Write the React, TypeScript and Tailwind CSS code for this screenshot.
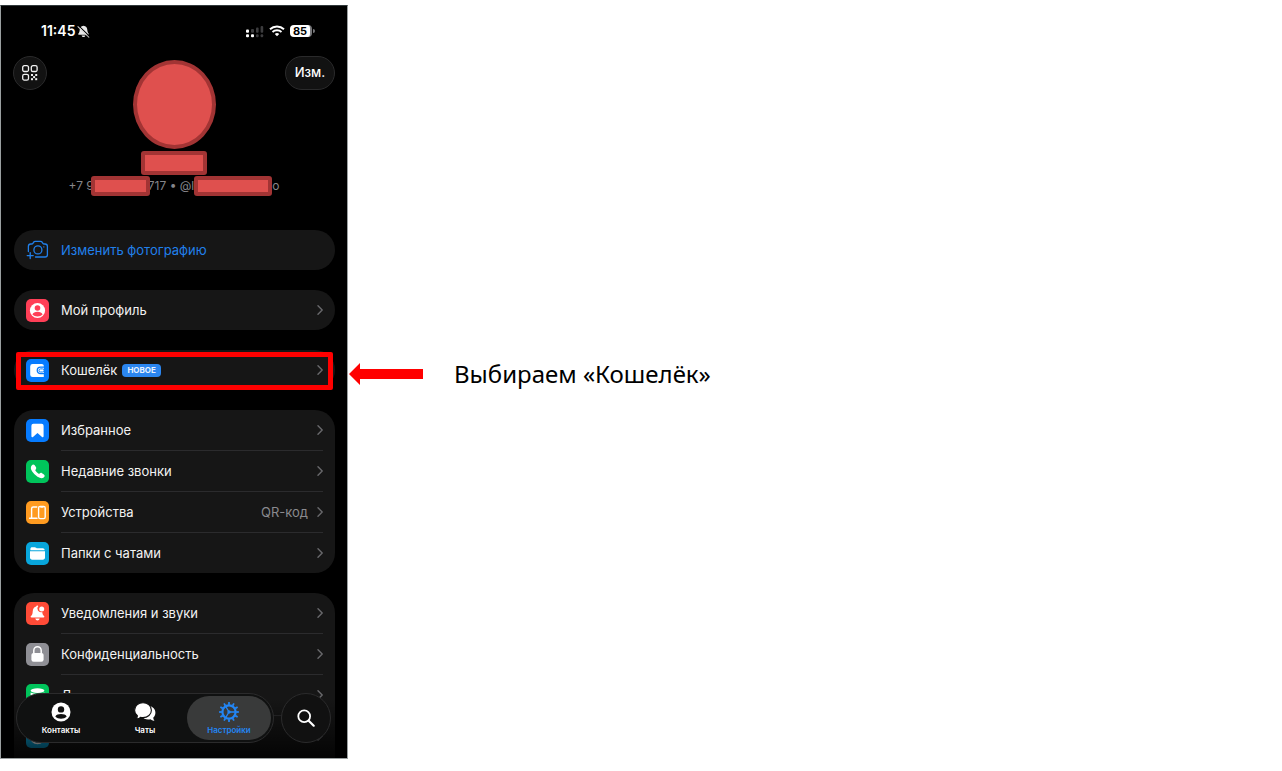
import React from 'react';

type RowProps = {
  icon: React.ReactNode;
  label?: string;
  badge?: string;
  value?: string;
  divided?: boolean;
};

function Chevron() {
  return (
    <svg width="6" height="10" viewBox="0 0 6 10" fill="none" stroke="#69696c" strokeWidth="1.4" strokeLinecap="round" strokeLinejoin="round" aria-hidden="true">
      <path d="M1 .8 5.200 5 1 9.200" />
    </svg>
  );
}

function Tile({ className, children }: { className: string; children: React.ReactNode }) {
  return (
    <span className={`flex size-[23px] items-center justify-center rounded-[5px] ${className}`}>
      <svg width="23" height="23" viewBox="0 0 23 23" fill="none" aria-hidden="true">
        {children}
      </svg>
    </span>
  );
}

function Row({ icon, label, badge, value, divided }: RowProps) {
  return (
    <button type="button" className="flex w-full items-stretch gap-3 px-3 text-left">
      <span className="flex h-10 items-center">{icon}</span>
      <span className={divided ? 'flex h-[41px] flex-1 items-center border-b border-[#2b2b2d]' : 'flex h-10 flex-1 items-center'}>
        {label && <span className="text-[13px] leading-4 text-[#f2f2f2]">{label}</span>}
        {badge && (
          <span className="ml-[5px] rounded-[4px] bg-[#2b86f0] px-[5px] text-[8px] leading-[13px] font-bold text-[#e8f2ff]">{badge}</span>
        )}
        <span className="ml-auto flex items-center gap-[9px]">
          {value && <span className="text-[13px] leading-4 text-[#8a8a8e]">{value}</span>}
          <Chevron />
        </span>
      </span>
    </button>
  );
}

function ProfileTile() {
  return (
    <Tile className="bg-[#ff3f57]">
      <circle cx="11.5" cy="11.5" r="7.6" fill="#fff" />
      <circle cx="11.5" cy="9" r="2.8" fill="#ff3f57" />
      <path d="M6.4 15.6c.7-2 2.6-2.8 5.1-2.8s4.400.8 5.100 2.800c-1.200 1.300-3 2-5.100 2s-3.900-.7-5.100-2Z" fill="#ff3f57" />
    </Tile>
  );
}

function WalletTile() {
  return (
    <Tile className="bg-[#067bff]">
      <path d="M6.600 5h9.200c1.200 0 2 .8 2 1.900v11.200H6.600a2.400 2.400 0 0 1-2.400-2.400V7.400A2.400 2.400 0 0 1 6.600 5Z" fill="#fff" />
      <path d="M18.800 8.200h-4.300a3.200 3.200 0 0 0 0 6.500h4.300" stroke="#067bff" strokeWidth="1.300" />
      <rect x="13" y="9.900" width="5" height="3.100" rx="1.500" stroke="#067bff" strokeWidth="1" fill="#fff" />
    </Tile>
  );
}

function BookmarkTile() {
  return (
    <Tile className="bg-[#067bff]">
      <path d="M7.400 4.800h8.200a2 2 0 0 1 2 2v10.400c0 .9-.9 1.300-1.600.7l-4.500-3.900-4.500 3.900c-.7.6-1.600.2-1.600-.7V6.800a2 2 0 0 1 2-2Z" fill="#fff" />
    </Tile>
  );
}

function PhoneTile() {
  return (
    <Tile className="bg-[#00c45b]">
      <path d="M5.700 5.400c1-1.200 2-1.300 2.800-.3l1.400 2c.6.9.4 1.600-.2 2.300-.5.500-.5.900-.2 1.400a11 11 0 0 0 2.800 2.800c.5.300.9.300 1.400-.2.700-.6 1.400-.8 2.300-.2l1.900 1.300c1.100.9 1 1.900-.2 2.900-1.400 1.200-3.500.9-6.200-.6a17 17 0 0 1-5.300-5.200C4.600 8.900 4.400 6.900 5.700 5.400Z" fill="#fff" />
    </Tile>
  );
}

function DevicesTile() {
  return (
    <Tile className="bg-[#ff9b20]">
      <path d="M10.800 6H7.300C6.300 6 5.600 6.700 5.600 7.700v9" stroke="#fff" strokeWidth="1.400" strokeLinecap="round" strokeLinejoin="round" />
      <path d="M3.600 17.300h7.400" stroke="#fff" strokeWidth="1.500" strokeLinecap="round" />
      <rect x="12.600" y="5.400" width="6.600" height="12.200" rx="1.600" stroke="#fff" strokeWidth="1.400" />
      <path d="M14.800 6h2.200" stroke="#fff" strokeWidth="1.500" strokeLinecap="round" />
    </Tile>
  );
}

function FolderTile() {
  return (
    <Tile className="bg-[#08a6dc]">
      <path d="M4.400 8.200V6.900c0-1 .7-1.700 1.700-1.700h2.700c.5 0 .9.200 1.300.5l.7.600h6c1 0 1.800.7 1.800 1.700v.2Z" fill="#fff" />
      <path d="M4 9.300h15v6.300c0 1.300-.9 2.200-2.200 2.200H6.200c-1.300 0-2.200-.9-2.200-2.200Z" fill="#fff" />
    </Tile>
  );
}

function BellTile() {
  return (
    <Tile className="bg-[#ff4b37]">
      <path d="M12.300 4a3.700 3.700 0 0 0 3.900 6c.2 1.900.8 3.200 1.800 4 .7.700.4 1.500-.5 1.500h-12c-.9 0-1.200-.8-.5-1.500C6.200 12.900 6.600 11.700 6.700 9.400 6.800 6.300 8.400 4.900 10.200 4.400c.2-1 1.700-1.300 2.100-.4Z" fill="#fff" />
      <path d="M9.300 16.500h4.400c-.3 1.200-1.100 1.900-2.200 1.900s-1.900-.7-2.200-1.900Z" fill="#fff" />
      <circle cx="15.700" cy="6.900" r="2.500" fill="#fff" />
    </Tile>
  );
}

function LockTile() {
  return (
    <Tile className="bg-[#8f8f95]">
      <path d="M7.800 10.500V7.500a3.700 3.700 0 0 1 7.400 0v3" stroke="#fff" strokeWidth="1.500" />
      <rect x="5.400" y="9.900" width="12.200" height="8.800" rx="2.200" fill="#fff" />
    </Tile>
  );
}

function DataTile() {
  return (
    <Tile className="bg-[#00c45b]">
      <ellipse cx="11.500" cy="6.600" rx="6.900" ry="2.400" fill="#fff" />
      <path d="M4.600 8.600c3.600 1.900 10.200 1.900 13.800 0v3c-3.200 2.200-10.600 2.200-13.800 0ZM4.600 13c3.600 1.900 10.200 1.900 13.800 0v3.200c-3.200 2.400-10.600 2.400-13.800 0Z" fill="#fff" />
    </Tile>
  );
}

function AppearanceTile() {
  return (
    <Tile className="bg-[#08a6dc]">
      <circle cx="11.500" cy="11.500" r="7" stroke="#fff" strokeWidth="1.500" />
      <path d="M11.500 4.500a7 7 0 0 1 0 14Z" fill="#fff" />
    </Tile>
  );
}

function StatusBar() {
  return (
    <div className="flex h-5 items-center pr-8 pl-10">
      <span className="text-[14px] leading-5 font-semibold text-white">11:45</span>
      <svg className="ml-[2px]" width="13" height="13" viewBox="0 0 14 14" aria-label="Без звука">
        <path d="M7 .8c2.700.3 4 1.900 4.100 4.300.1 2.100.6 3.200 1.400 4.100.5.600.3 1.300-.5 1.300H2c-.8 0-1-.7-.5-1.300.8-.9 1.300-2 1.400-4.100C3 2.700 4.300 1.100 7 .8ZM5 11.400h4c-.3 1.100-1 1.600-2 1.600s-1.700-.5-2-1.600Z" fill="#e8e8e8" />
        <path d="m1.900 1 11.400 11" stroke="#000" strokeWidth="1.100" />
        <path d="m1 1.800 11.800 11.400" stroke="#d7d7d7" strokeWidth="1.100" strokeLinecap="round" />
      </svg>
      <div className="ml-auto flex items-center gap-[5px]">
        <svg width="19" height="13" viewBox="0 0 19 13" aria-label="Сигнал">
          <rect x="1" y="4.500" width="3" height="3.200" rx="1" fill="#fff" />
          <rect x="1" y="9.300" width="3" height="3" rx="1" fill="#fff" />
          <rect x="6" y="9.300" width="3" height="3" rx="1" fill="#fff" />
          <g fill="#3c3c3e">
            <rect x="6" y="4" width="3" height="3.700" rx="1" />
            <rect x="11" y="2.500" width="2.600" height="5.200" rx="1" />
            <rect x="11" y="9.300" width="2.600" height="3" rx="1" />
            <rect x="15.600" y="1" width="2.600" height="6.700" rx="1" />
            <rect x="15.600" y="9.300" width="2.600" height="3" rx="1" />
          </g>
        </svg>
        <svg width="16" height="12" viewBox="0 0 16 12" fill="none" stroke="#fff" strokeWidth="1.900" aria-label="Wi-Fi">
          <path d="M1 4.300c3.900-3.700 10.100-3.700 14 0" />
          <path d="M3.500 7c2.500-2.300 6.500-2.300 9 0" />
          <path d="M5.800 8.900a3.300 3.300 0 0 1 4.400 0L8 11.300Z" fill="#fff" stroke="none" />
        </svg>
        <span className="flex items-center gap-px">
          <span className="flex h-3 w-[22px] items-center justify-center rounded-[4px] border-r-2 border-[#77777a] bg-white text-[11px] leading-3 font-bold text-black">85</span>
          <span className="h-1 w-[2px] rounded-r-sm bg-[#77777a]" />
        </span>
      </div>
    </div>
  );
}

function Redaction({ className }: { className: string }) {
  return <span className={`relative block shrink-0 border-4 border-[#a23434] bg-[#df504e] ${className}`} />;
}

function Card({ children, className = '' }: { children: React.ReactNode; className?: string }) {
  return <section className={`relative bg-[#161616] ${className}`}>{children}</section>;
}

const gearTeeth = [0, 30, 60, 90, 120, 150, 180, 210, 240, 270, 300, 330];

function TabBar() {
  return (
    <div className="absolute right-4 bottom-[15px] left-[15px] flex items-center gap-[7px]">
      <nav className="grid flex-1 grid-cols-3 rounded-full border border-[#2b2b2c] bg-[#101111] p-[2px] text-[8px] leading-2 font-semibold text-white">
        <button type="button" className="flex h-11 flex-col items-center gap-1 pt-[6px]">
          <svg width="20" height="20" viewBox="0 0 20 20" aria-hidden="true">
            <circle cx="10" cy="10" r="9.500" fill="#fff" />
            <circle cx="10" cy="7.400" r="3.200" fill="#111" />
            <path d="M4.300 14.500c.9-1.800 3.100-2.500 5.700-2.500s4.800.7 5.700 2.500c-1.400 1.500-3.400 2.200-5.700 2.200s-4.300-.7-5.700-2.200Z" fill="#111" />
          </svg>
          Контакты
        </button>
        <button type="button" className="flex h-11 flex-col items-center gap-1 pt-[6px]">
          <svg width="22" height="20" viewBox="0 0 22 20" aria-hidden="true">
            <path d="M14.500 3.800c4 .5 6.900 3.300 6.900 6.900 0 2-.8 3.700-2.200 5 .1 1.200.6 2.200 1.300 2.900-1.400.2-2.900-.3-4.100-1.300-3.600.7-6.800-.4-8.500-2.700Z" fill="#fff" />
            <path d="M9 .8c4.700 0 8.400 3.200 8.400 7.400s-3.700 7.400-8.400 7.400c-.9 0-1.700-.1-2.500-.3-1 .9-2.700 1.600-4.200 1.300.7-.8 1.100-1.800 1.100-2.800A7.100 7.100 0 0 1 .6 8.200C.6 4 4.300.8 9 .8Z" fill="#fff" stroke="#111" strokeWidth="1.100" />
          </svg>
          Чаты
        </button>
        <button type="button" aria-current="page" className="flex h-11 flex-col items-center gap-1 rounded-full bg-[#393a3a] pt-[6px] text-[#2386f5]">
          <svg width="20" height="20" viewBox="0 0 20 20" fill="none" stroke="currentColor" aria-hidden="true">
            <circle cx="10" cy="10" r="6.600" strokeWidth="2.200" />
            {gearTeeth.map((angle) => (
              <path key={angle} d="M9.200 0h1.600l.2 2.800H9Z" fill="currentColor" stroke="none" transform={`rotate(${angle} 10 10)`} />
            ))}
            <circle cx="10" cy="10" r="1.700" fill="currentColor" stroke="none" />
            <path d="M10 10 6.700 4.300M10 10h6.500M10 10l-3.300 5.700" strokeWidth="1.300" />
          </svg>
          Настройки
        </button>
      </nav>
      <button type="button" aria-label="Поиск" className="flex size-[50px] items-center justify-center rounded-full border border-[#2b2b2c] bg-[#111111]">
        <svg width="18" height="18" viewBox="0 0 18 18" fill="none" stroke="#fff" strokeWidth="1.800" strokeLinecap="round" aria-hidden="true">
          <circle cx="7.200" cy="7.200" r="5.900" />
          <path d="m11.700 11.700 5 5" strokeWidth="2.200" />
        </svg>
      </button>
    </div>
  );
}

function Phone() {
  return (
    <div className="relative w-[348px] shrink-0 overflow-hidden border border-[#9a9fa0] border-t-[#30383a] bg-black">
      <div className="pt-[15px]">
        <StatusBar />
      </div>
      <header className="flex items-start justify-between pt-[15px] pr-3 pl-3">
        <button type="button" aria-label="QR-код" className="flex size-[34px] items-center justify-center rounded-full border border-[#2a2a2b] bg-[#121212]">
          <svg width="16" height="16" viewBox="0 0 16 16" className="shrink-0" fill="none" stroke="#f0f0f0" strokeWidth="1.300" aria-hidden="true">
            <rect x=".7" y=".7" width="5.800" height="5.800" rx="1.600" />
            <rect x="9.300" y=".7" width="5.800" height="5.800" rx="1.600" />
            <rect x=".7" y="9.300" width="5.800" height="5.800" rx="1.600" />
            <g fill="#f0f0f0" stroke="none">
              <rect x="9" y="9" width="2" height="2" />
              <rect x="13.200" y="9" width="2" height="2" />
              <rect x="11.100" y="11.100" width="2" height="2" />
              <rect x="9" y="13.200" width="2" height="2" />
              <rect x="13.200" y="13.200" width="2" height="2" />
            </g>
          </svg>
        </button>
        <div className="flex flex-col items-center gap-[2px] pt-1 pl-4">
          <Redaction className="h-[89px] w-[83px] rounded-[50%]" />
          <Redaction className="h-6 w-[66px] rounded-[3px]" />
        </div>
        <button type="button" className="h-[34px] w-[50px] rounded-full border border-[#2a2a2b] bg-[#121212] text-[13px] font-medium text-white">Изм.</button>
      </header>
      <p className="flex h-[22px] items-center justify-center text-[12px] text-[#85858a]">
        <span>+7 9</span>
        <Redaction className="-ml-[3px] h-5 w-[59px] rounded-[3px]" />
        <span className="-ml-[2px] whitespace-pre">717 • @l</span>
        <Redaction className="h-5 w-[78px] rounded-[3px]" />
        <span>o</span>
      </p>
      <main className="flex flex-col gap-5 pt-[33px] pr-3 pl-[13px]">
        <Card className="rounded-full">
          <button type="button" className="flex h-10 w-full items-center gap-3 px-3 text-[13px] leading-4 text-[#2180eb]">
            <svg width="23" height="20" viewBox="0 0 23 20" fill="none" stroke="currentColor" strokeWidth="1.300" strokeLinecap="round" strokeLinejoin="round" aria-hidden="true">
              <path d="M2.400 11.500V6.300c0-1.400.9-2.300 2.300-2.300h.9c.6 0 1-.2 1.300-.7l.6-.9c.4-.7 1-1 1.800-1h5.200c.8 0 1.400.3 1.800 1l.6.9c.3.500.7.7 1.300.7h.9c1.400 0 2.300.9 2.300 2.300v8.400c0 1.400-.9 2.300-2.300 2.300H9.500" />
              <circle cx="11.900" cy="9.900" r="4" />
              <path d="M4.200 12.600v6M1.200 15.600h6" />
              <circle cx="17.800" cy="6.900" r=".7" fill="currentColor" stroke="none" />
            </svg>
            Изменить фотографию
          </button>
        </Card>
        <Card className="rounded-full">
          <Row icon={<ProfileTile />} label="Мой профиль" />
        </Card>
        <Card className="rounded-full">
          <Row icon={<WalletTile />} label="Кошелёк" badge="НОВОЕ" />
          <span className="pointer-events-none absolute inset-x-[2px] top-[2px] bottom-0 rounded-[2px] border-[5px] border-[#ff0000]" />
        </Card>
        <Card className="rounded-[20px]">
          <Row icon={<BookmarkTile />} label="Избранное" divided />
          <Row icon={<PhoneTile />} label="Недавние звонки" divided />
          <Row icon={<DevicesTile />} label="Устройства" value="QR-код" divided />
          <Row icon={<FolderTile />} label="Папки с чатами" />
        </Card>
        <Card className="rounded-t-[20px] pb-[2px]">
          <Row icon={<BellTile />} label="Уведомления и звуки" divided />
          <Row icon={<LockTile />} label="Конфиденциальность" divided />
          <Row icon={<DataTile />} label="Д" divided />
          <Row icon={<AppearanceTile />} />
        </Card>
      </main>
      <div className="pointer-events-none absolute inset-x-0 bottom-0 h-15 bg-linear-to-b from-transparent to-black/80" />
      <TabBar />
    </div>
  );
}

export default function App() {
  return (
    <div className="flex min-h-screen items-start bg-white pt-[5px] font-['Inter','Liberation_Sans',sans-serif]">
      <Phone />
      <aside className="flex items-center gap-[31px] pt-[353px] pl-px">
        <svg width="74" height="22" viewBox="0 0 74 22" aria-hidden="true">
          <path d="M0 11 11 0v6h63v10H11v6Z" fill="#ff0000" />
        </svg>
        <p className="font-['Noto_Sans','Open_Sans',sans-serif] text-[24px] leading-8 text-black">Выбираем «Кошелёк»</p>
      </aside>
    </div>
  );
}
